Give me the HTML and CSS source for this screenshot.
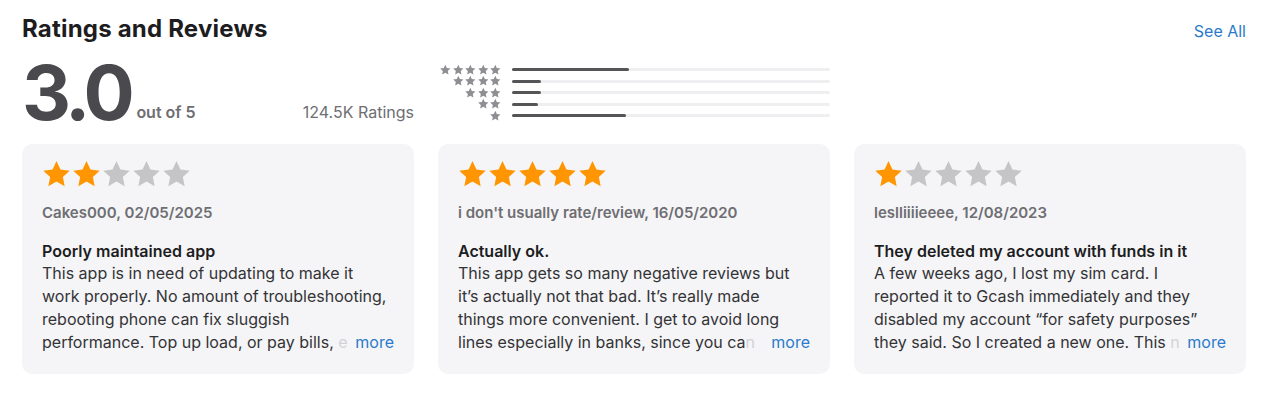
FILE: index.html
```html
<!DOCTYPE html>
<html lang="en">
<head>
    <meta charset="UTF-8">
    <meta name="viewport" content="width=device-width, initial-scale=1.0">
    <title>Ratings and Reviews</title>
    <link rel="stylesheet" href="styles.css">
</head>
<body>

    <!-- star shape shared by every rating row -->
    <svg width="0" height="0" class="defs">
        <defs>
            <path id="star" d="M12 1.6l3.05 6.55 7.15.85-5.27 4.92 1.38 7.08L12 17.5l-6.31 3.5 1.38-7.08L1.8 9l7.15-.85z"/>
        </defs>
    </svg>

    <section class="ratings">

        <!-- Header -->
        <div class="section-head">
            <h2>Ratings and Reviews</h2>
            <a class="see-all" href="#">See All</a>
        </div>

        <!-- Summary -->
        <div class="summary">
            <div class="score">
                <div class="score-main">
                    <span class="score-num">3.0</span>
                    <span class="score-out">out of 5</span>
                </div>
                <span class="score-count">124.5K Ratings</span>
            </div>

            <div class="histogram">
                <div class="hist-stars">
                    <svg viewBox="0 0 24 24"><use href="#star"/></svg><svg viewBox="0 0 24 24"><use href="#star"/></svg><svg viewBox="0 0 24 24"><use href="#star"/></svg><svg viewBox="0 0 24 24"><use href="#star"/></svg><svg viewBox="0 0 24 24"><use href="#star"/></svg>
                </div>
                <div class="hist-bar"><span style="width: 36.8%"></span></div>

                <div class="hist-stars">
                    <svg viewBox="0 0 24 24"><use href="#star"/></svg><svg viewBox="0 0 24 24"><use href="#star"/></svg><svg viewBox="0 0 24 24"><use href="#star"/></svg><svg viewBox="0 0 24 24"><use href="#star"/></svg>
                </div>
                <div class="hist-bar"><span style="width: 9.1%"></span></div>

                <div class="hist-stars">
                    <svg viewBox="0 0 24 24"><use href="#star"/></svg><svg viewBox="0 0 24 24"><use href="#star"/></svg><svg viewBox="0 0 24 24"><use href="#star"/></svg>
                </div>
                <div class="hist-bar"><span style="width: 9.1%"></span></div>

                <div class="hist-stars">
                    <svg viewBox="0 0 24 24"><use href="#star"/></svg><svg viewBox="0 0 24 24"><use href="#star"/></svg>
                </div>
                <div class="hist-bar"><span style="width: 8.2%"></span></div>

                <div class="hist-stars">
                    <svg viewBox="0 0 24 24"><use href="#star"/></svg>
                </div>
                <div class="hist-bar"><span style="width: 35.8%"></span></div>
            </div>
        </div>

        <!-- Review cards -->
        <div class="reviews">
            <div class="review">
                <div class="review-stars">
                    <svg class="on" viewBox="0 0 24 24"><use href="#star"/></svg><svg class="on" viewBox="0 0 24 24"><use href="#star"/></svg><svg viewBox="0 0 24 24"><use href="#star"/></svg><svg viewBox="0 0 24 24"><use href="#star"/></svg><svg viewBox="0 0 24 24"><use href="#star"/></svg>
                </div>
                <p class="review-author">Cakes000, 02/05/2025</p>
                <h3 class="review-title">Poorly maintained app</h3>
                <p class="review-body"><a class="more" href="#">more</a>This app is in need of updating to make it work properly. No amount of troubleshooting, rebooting phone can fix sluggish performance. Top up load, or pay bills, <span class="fade">e</span></p>
            </div>

            <div class="review">
                <div class="review-stars">
                    <svg class="on" viewBox="0 0 24 24"><use href="#star"/></svg><svg class="on" viewBox="0 0 24 24"><use href="#star"/></svg><svg class="on" viewBox="0 0 24 24"><use href="#star"/></svg><svg class="on" viewBox="0 0 24 24"><use href="#star"/></svg><svg class="on" viewBox="0 0 24 24"><use href="#star"/></svg>
                </div>
                <p class="review-author">i don't usually rate/review, 16/05/2020</p>
                <h3 class="review-title">Actually ok.</h3>
                <p class="review-body"><a class="more" href="#">more</a>This app gets so many negative reviews but it’s actually not that bad. It’s really made things more convenient. I get to avoid long lines especially in banks, since you ca<span class="fade">n</span></p>
            </div>

            <div class="review">
                <div class="review-stars">
                    <svg class="on" viewBox="0 0 24 24"><use href="#star"/></svg><svg viewBox="0 0 24 24"><use href="#star"/></svg><svg viewBox="0 0 24 24"><use href="#star"/></svg><svg viewBox="0 0 24 24"><use href="#star"/></svg><svg viewBox="0 0 24 24"><use href="#star"/></svg>
                </div>
                <p class="review-author">leslliiiieeee, 12/08/2023</p>
                <h3 class="review-title">They deleted my account with funds in it</h3>
                <p class="review-body"><a class="more" href="#">more</a>A few weeks ago, I lost my sim card. I reported it to Gcash immediately and they disabled my account “for safety purposes” they said. So I created a new one. This <span class="fade">n</span></p>
            </div>
        </div>

    </section>

</body>
</html>
```

FILE: styles.css
```css
/* App Store style ratings block */
body {
    font-family: 'Inter', 'Liberation Sans', sans-serif;
    background-color: #ffffff;
    color: #1d1d1f;
    margin: 0;
    padding: 0;
}

.defs {
    position: absolute;
}

.ratings {
    padding: 14px 34px 0 22px;
}

/* Header */
.section-head {
    display: flex;
    justify-content: space-between;
    align-items: baseline;
}

.section-head h2 {
    margin: 0;
    font-size: 24px;
    line-height: 30px;
    font-weight: 700;
    letter-spacing: 0.2px;
}

.see-all {
    color: #2a7bc9;
    text-decoration: none;
    font-size: 16px;
}

/* Summary */
.summary {
    display: grid;
    grid-template-columns: 392px 392px;
    gap: 24px;
    margin-top: 18px;
    height: 64px;
}

.score {
    display: flex;
    justify-content: space-between;
    align-items: baseline;
}

.score-main {
    display: flex;
    align-items: baseline;
    gap: 6px;
}

.score-num {
    font-size: 76px;
    line-height: 60px;
    font-weight: 700;
    color: #4a4a4e;
    letter-spacing: -4.5px;
}

.score-out {
    font-size: 16px;
    font-weight: 600;
    color: #6e6e73;
    position: relative;
    top: -2px;
}

.score-count {
    font-size: 16px;
    color: #6e6e73;
    position: relative;
    top: -2px;
}

.histogram {
    display: grid;
    grid-template-columns: 64px 1fr;
    grid-auto-rows: 11.5px;
    column-gap: 10px;
    align-items: center;
    padding-top: 2px;
}

.hist-stars {
    display: flex;
    justify-content: flex-end;
}

.hist-stars svg {
    width: 12.6px;
    height: 12px;
    fill: #8e8e93;
}

.hist-bar {
    height: 3px;
    background-color: #efeff1;
    border-radius: 2px;
}

.hist-bar span {
    display: block;
    height: 100%;
    background-color: #555558;
    border-radius: 2px;
}

/* Review cards */
.reviews {
    display: grid;
    grid-template-columns: repeat(3, 392px);
    gap: 24px;
    margin-top: 18px;
}

.review {
    background-color: #f5f5f7;
    border-radius: 10px;
    padding: 15px 20px 20px;
    height: 230px;
    box-sizing: border-box;
}

.review-stars {
    display: flex;
    height: 31px;
    margin-left: -1px;
}

.review-stars svg {
    width: 31px;
    height: 31px;
    fill: #c5c5c7;
    margin-right: -1px;
}

.review-stars svg.on {
    fill: #ff9500;
}

.review-author {
    margin: 13px 0 0;
    font-size: 15px;
    line-height: 20px;
    font-weight: 600;
    color: #6e6e73;
}

.review-title {
    margin: 17px 0 0;
    font-size: 16px;
    line-height: 22px;
    font-weight: 600;
    color: #1d1d1f;
}

/* four lines of text, "more" sits in the bottom right corner */
.review-body {
    margin: 0;
    height: 92px;
    font-size: 16px;
    line-height: 23px;
    color: #333336;
}

.review-body::before {
    content: "";
    float: right;
    width: 0;
    height: 69px;
}

.review-body .fade {
    color: #d2d2d6;
}

.more {
    float: right;
    clear: right;
    color: #2a7bc9;
    text-decoration: none;
}
```
